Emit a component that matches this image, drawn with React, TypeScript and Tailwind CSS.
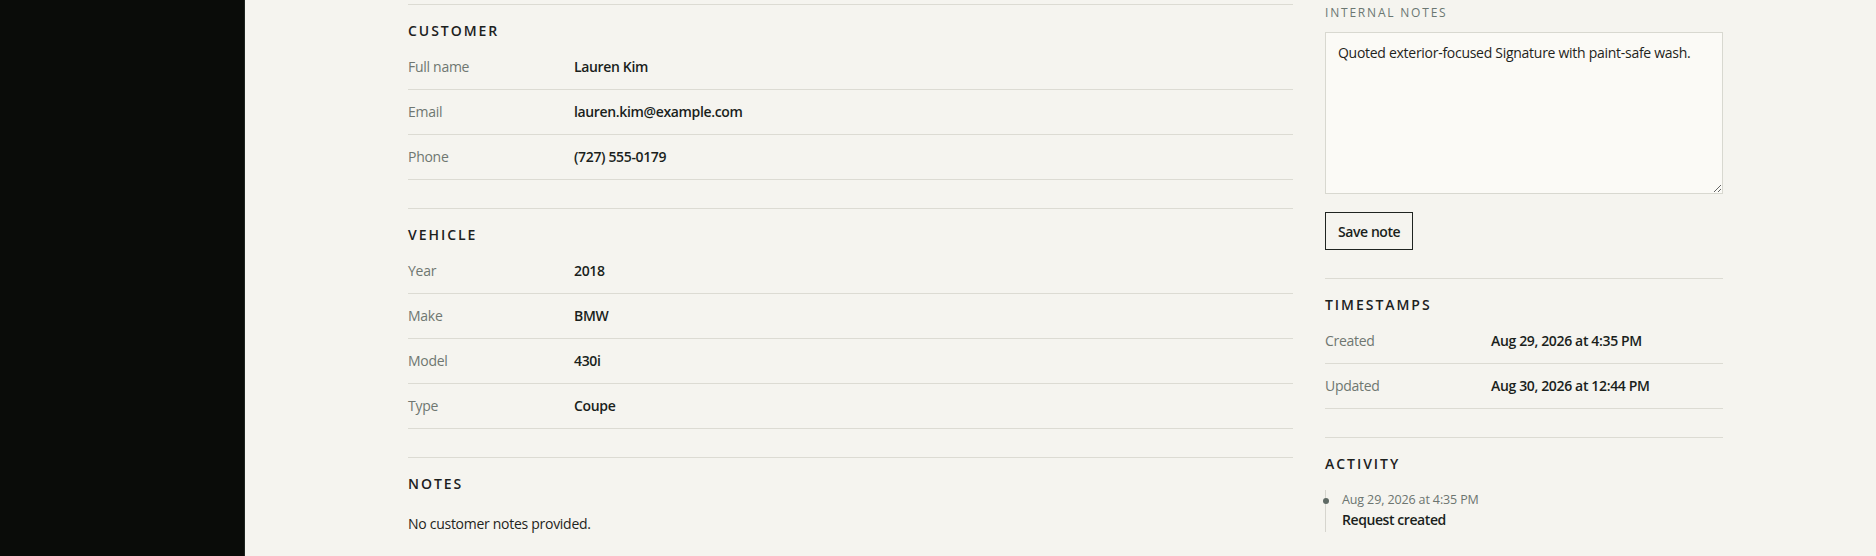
import React from 'react';

type Row = { label: string; value: string };

const customer: Row[] = [
  { label: 'Full name', value: 'Lauren Kim' },
  { label: 'Email', value: 'lauren.kim@example.com' },
  { label: 'Phone', value: '(727) 555-0179' },
];

const vehicle: Row[] = [
  { label: 'Year', value: '2018' },
  { label: 'Make', value: 'BMW' },
  { label: 'Model', value: '430i' },
  { label: 'Type', value: 'Coupe' },
];

const timestamps: Row[] = [
  { label: 'Created', value: 'Aug 29, 2026 at 4:35 PM' },
  { label: 'Updated', value: 'Aug 30, 2026 at 12:44 PM' },
];

function Heading({ children }: { children: React.ReactNode }) {
  return (
    <h2 className="text-[14px] leading-5 font-semibold uppercase tracking-[0.14em] text-[#1c211e]">
      {children}
    </h2>
  );
}

function DetailList({ rows }: { rows: Row[] }) {
  return (
    <dl className="mt-1">
      {rows.map((row) => (
        <div
          key={row.label}
          className="grid grid-cols-[166px_1fr] items-center h-[45px] border-b border-[#dcdbd3] text-[14px] leading-5"
        >
          <dt className="text-[#6f7771] tracking-[-0.02em]">{row.label}</dt>
          <dd className="font-semibold text-[#1a1f1c] tracking-[-0.025em]">{row.value}</dd>
        </div>
      ))}
    </dl>
  );
}

function Section({ title, children, last }: { title: string; children: React.ReactNode; last?: boolean }) {
  return (
    <section className={`border-t border-[#dcdbd3] pt-4 ${last ? '' : 'mb-7'}`}>
      <Heading>{title}</Heading>
      {children}
    </section>
  );
}

export default function App() {
  return (
    <div
      className="flex h-[556px] overflow-hidden bg-[#f5f4ef]"
      style={{ fontFamily: '"Open Sans", "Noto Sans", sans-serif' }}
    >
      {/* sidebar */}
      <aside className="w-[245px] shrink-0 bg-[#0a0c09] border-r border-[#1f2521]" />

      <main className="flex-1 pl-[163px] pt-[4px]">
        <div className="grid grid-cols-[885px_398px] gap-8">
          {/* details */}
          <div>
            <Section title="Customer">
              <DetailList rows={customer} />
            </Section>
            <Section title="Vehicle">
              <DetailList rows={vehicle} />
            </Section>
            <Section title="Notes" last>
              <p className="mt-[20px] text-[14px] leading-5 tracking-[-0.02em] text-[#1f2420]">
                No customer notes provided.
              </p>
            </Section>
          </div>

          {/* sidebar panel */}
          <div>
            <div className="mb-7">
              <label className="block pt-px mb-[11px] text-[12px] leading-4 font-medium uppercase tracking-[0.15em] text-[#6b7772]">
                Internal notes
              </label>
              <textarea
                className="block w-full h-[162px] resize-y border border-[#d8d8d0] bg-[#fbfaf6] px-3 py-2.5 text-[14px] leading-5 tracking-[-0.02em] text-[#1f2420] outline-none"
                defaultValue="Quoted exterior-focused Signature with paint-safe wash."
              />
              <button className="mt-[18px] h-[38px] px-[12px] border border-[#1f2421] text-[14px] font-semibold tracking-[-0.03em] text-[#1a1f1c]">
                Save note
              </button>
            </div>

            <Section title="Timestamps">
              <DetailList rows={timestamps} />
            </Section>

            <Section title="Activity" last>
              <ol className="mt-4">
                <li className="relative border-l border-[#d6d5ce] pl-4 pb-px">
                  <span className="absolute -left-[3px] top-[8px] h-[6px] w-[6px] rounded-full bg-[#5f6a65]" />
                  <p className="text-[12.5px] leading-[19px] tracking-[-0.01em] text-[#6c7570]">Aug 29, 2026 at 4:35 PM</p>
                  <p className="text-[14px] leading-[22px] font-semibold tracking-[-0.03em] text-[#1a1f1c]">
                    Request created
                  </p>
                </li>
              </ol>
            </Section>
          </div>
        </div>
      </main>
    </div>
  );
}
